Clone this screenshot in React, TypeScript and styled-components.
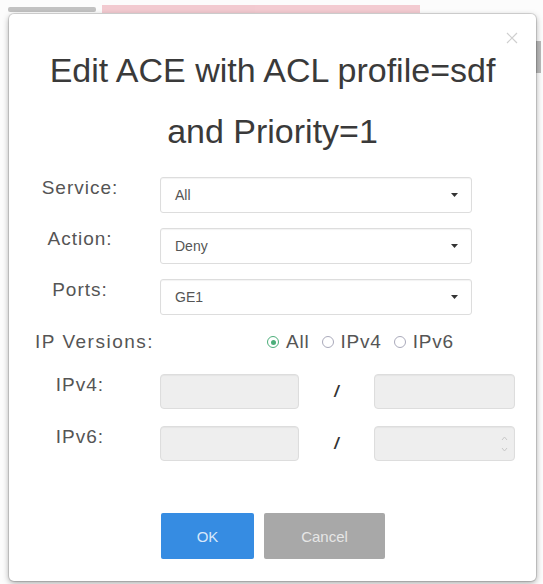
import React, { useState } from 'react'
import styled, { createGlobalStyle } from 'styled-components'

const GlobalStyle = createGlobalStyle`
	html, body {
		margin: 0;
		padding: 0;
		background: #fcfcfc;
		font-family: 'Liberation Sans', Arial, Helvetica, sans-serif;
	}
`

type IpVersion = 'All' | 'IPv4' | 'IPv6'

const Caret = () => (
	<svg width='7' height='4' viewBox='0 0 7 4'>
		<path d='M0 0h7L3.5 4z' fill='#333' />
	</svg>
)

const CloseIcon = () => (
	<svg width='12' height='12' viewBox='0 0 12 12'>
		<path d='M1 1l10 10M11 1L1 11' stroke='#cfcfcf' strokeWidth='1.2' />
	</svg>
)

const Spinner = () => (
	<svg width='7' height='22' viewBox='0 0 7 22'>
		<path d='M1 7l2.5-3L6 7' fill='none' stroke='#c8c8c8' strokeWidth='1' />
		<path d='M1 15l2.5 3L6 15' fill='none' stroke='#c8c8c8' strokeWidth='1' />
	</svg>
)

export default function App() {
	const [ipVersion, setIpVersion] = useState<IpVersion>('All')
	const versions: IpVersion[] = ['All', 'IPv4', 'IPv6']

	return (
		<Page>
			<GlobalStyle />
			{/* page behind the dialog */}
			<Backdrop>
				<TabStrip>
					<Tab />
					<Notice />
				</TabStrip>
				<SideRail />
			</Backdrop>
			<Modal>
				<Close>
					<CloseIcon />
				</Close>
				<Title>
					Edit ACE with ACL profile=sdf
					<br />
					and Priority=1
				</Title>
				<Form>
					<Row>
						<Label>Service:</Label>
						<Select>
							<span>All</span>
							<Caret />
						</Select>
					</Row>
					<Row $mt={15}>
						<Label>Action:</Label>
						<Select>
							<span>Deny</span>
							<Caret />
						</Select>
					</Row>
					<Row $mt={15}>
						<Label>Ports:</Label>
						<Select>
							<span>GE1</span>
							<Caret />
						</Select>
					</Row>
					<VersionRow>
						<VersionLabel>IP Versions:</VersionLabel>
						<Radios>
							{versions.map(v => (
								<RadioItem key={v} onClick={() => setIpVersion(v)}>
									<RadioDot $checked={ipVersion === v} />
									{v}
								</RadioItem>
							))}
						</Radios>
					</VersionRow>
					<Row $mt={20}>
						<Label>IPv4:</Label>
						<AddressGroup>
							<AddrInput />
							<Slash>/</Slash>
							<MaskInput />
						</AddressGroup>
					</Row>
					<Row $mt={17}>
						<Label>IPv6:</Label>
						<AddressGroup>
							<AddrInput />
							<Slash>/</Slash>
							<MaskInput>
								<Spinner />
							</MaskInput>
						</AddressGroup>
					</Row>
				</Form>
				<Buttons>
					<Button $primary>OK</Button>
					<Button>Cancel</Button>
				</Buttons>
			</Modal>
		</Page>
	)
}

const Page = styled.div`
	position: relative;
	width: 543px;
	height: 584px;
	overflow: hidden;
`
const Backdrop = styled.div`
	height: 100%;
	display: flex;
	flex-direction: column;
	opacity: 0.5;
`
const TabStrip = styled.div`
	display: flex;
	gap: 6px;
	padding: 5px 0 0 8px;
	height: 8px;
`
const Tab = styled.div`
	width: 88px;
	height: 5px;
	margin-top: 2px;
	background: #8a8a8a;
	border-radius: 2px;
`
const Notice = styled.div`
	width: 318px;
	height: 8px;
	background: #e99aa6;
`
const SideRail = styled.div`
	align-self: flex-end;
	width: 5px;
	height: 32px;
	margin-top: 28px;
	margin-right: 2px;
	background: #777;
`
const Modal = styled.div`
	position: absolute;
	left: 9px;
	top: 14px;
	width: 527px;
	height: 567px;
	box-sizing: border-box;
	background: #fff;
	border-radius: 5px;
	box-shadow: 0 0 0 1px rgba(0, 0, 0, 0.12), 0 2px 6px rgba(0, 0, 0, 0.35);
	padding-top: 26px;
	display: flex;
	flex-direction: column;
`
const Close = styled.div`
	position: absolute;
	top: 18px;
	right: 18px;
	display: flex;
	cursor: pointer;
`
const Title = styled.h3`
	margin: 0;
	font-size: 34px;
	font-weight: normal;
	line-height: 61px;
	color: #3a3a3a;
	text-align: center;
`
const Form = styled.div`
	display: flex;
	flex-direction: column;
	padding: 15px 0 0 21px;
`
const Row = styled.div<{ $mt?: number }>`
	display: flex;
	align-items: flex-start;
	gap: 30px;
	margin-top: ${p => p.$mt || 0}px;
`
const Label = styled.div`
	width: 100px;
	text-align: center;
	font-size: 19px;
	letter-spacing: 1px;
	line-height: 22px;
	color: #555;
`
const Select = styled.div`
	width: 312px;
	height: 36px;
	box-sizing: border-box;
	border: 1px solid #ddd;
	border-radius: 3px;
	box-shadow: inset 0 1px 1px rgba(0, 0, 0, 0.05);
	display: flex;
	align-items: center;
	justify-content: space-between;
	padding: 0 13px 0 14px;
	font-size: 14px;
	color: #555;
`
const VersionRow = styled.div`
	display: flex;
	align-items: center;
	height: 24px;
	margin-top: 15px;
	padding-left: 5px;
`
const VersionLabel = styled.div`
	width: 232px;
	font-size: 19px;
	letter-spacing: 1.5px;
	color: #555;
`
const Radios = styled.div`
	display: flex;
	align-items: center;
	gap: 12px;
	font-size: 19px;
	letter-spacing: 0.8px;
	color: #555;
`
const RadioItem = styled.label`
	display: flex;
	align-items: center;
	gap: 7px;
	cursor: pointer;
`
const RadioDot = styled.span<{ $checked: boolean }>`
	width: 12px;
	height: 12px;
	box-sizing: border-box;
	border-radius: 50%;
	border: 1px solid ${p => (p.$checked ? '#4cae7a' : '#aab')};
	display: flex;
	align-items: center;
	justify-content: center;
	&::after {
		content: '';
		width: 5px;
		height: 5px;
		border-radius: 50%;
		background: ${p => (p.$checked ? '#4cae7a' : 'transparent')};
	}
`
const AddressGroup = styled.div`
	display: flex;
	align-items: center;
`
const Field = styled.div`
	height: 35px;
	box-sizing: border-box;
	background: #eee;
	border: 1px solid #ddd;
	border-radius: 4px;
	box-shadow: inset 0 1px 1px rgba(0, 0, 0, 0.04);
`
const AddrInput = styled(Field)`
	width: 139px;
`
const MaskInput = styled(Field)`
	width: 141px;
	display: flex;
	align-items: center;
	justify-content: flex-end;
	padding-right: 6px;
`
const Slash = styled.span`
	width: 75px;
	text-align: center;
	font-size: 16px;
	font-weight: bold;
	font-style: italic;
	color: #333;
`
const Buttons = styled.div`
	display: flex;
	gap: 10px;
	margin: 52px 0 0 152px;
`
const Button = styled.button<{ $primary?: boolean }>`
	height: 46px;
	width: ${p => (p.$primary ? 93 : 121)}px;
	border: none;
	border-radius: 2px;
	background: ${p => (p.$primary ? '#368ce2' : '#a8a8a8')};
	color: ${p => (p.$primary ? '#d6e8fa' : '#e6e6e6')};
	font-family: inherit;
	font-size: 15px;
	cursor: pointer;
`
